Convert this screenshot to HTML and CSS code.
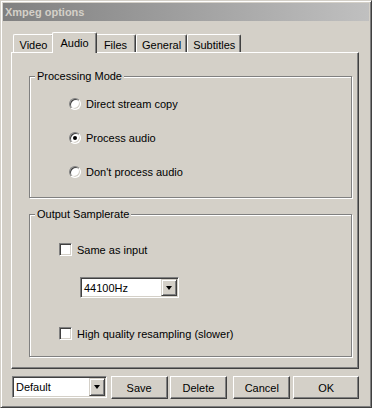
FILE: index.html
```html
<!DOCTYPE html>
<html lang="en">
<head>
	<meta charset="UTF-8">
	<title>Xmpeg options</title>
	<link rel="stylesheet" href="styles.css">
</head>
<body>
	<div class="window">
		<div class="titlebar">Xmpeg options</div>
		<div class="content">
			<div class="tabs">
				<div class="tab">Video</div>
				<div class="tab active">Audio</div>
				<div class="tab">Files</div>
				<div class="tab">General</div>
				<div class="tab">Subtitles</div>
			</div>
			<div class="panel">
				<fieldset class="group mode">
					<legend>Processing Mode</legend>
					<div class="options">
						<label class="option"><span class="radio"></span>Direct stream copy</label>
						<label class="option"><span class="radio checked"></span>Process audio</label>
						<label class="option"><span class="radio"></span>Don't process audio</label>
					</div>
				</fieldset>
				<fieldset class="group rate">
					<legend>Output Samplerate</legend>
					<div class="options">
						<label class="option"><span class="check"></span>Same as input</label>
						<div class="select rate-select">
							<span class="value">44100Hz</span>
							<span class="drop"><i class="arrow"></i></span>
						</div>
						<label class="option last"><span class="check"></span>High quality resampling (slower)</label>
					</div>
				</fieldset>
			</div>
			<div class="footer">
				<div class="select preset">
					<span class="value">Default</span>
					<span class="drop"><i class="arrow"></i></span>
				</div>
				<button class="btn save">Save</button>
				<button class="btn delete">Delete</button>
				<button class="btn cancel">Cancel</button>
				<button class="btn ok">OK</button>
			</div>
		</div>
	</div>
</body>
</html>
```

FILE: styles.css
```css
* { margin: 0; padding: 0; box-sizing: border-box; }
body {
	background: #d4d0c8;
	font: 11px "Liberation Sans", Arial, sans-serif;
	color: #000;
}
.window {
	width: 372px;
	height: 408px;
	padding: 2px;
	background: #d4d0c8;
	border: 1px solid;
	border-color: #d4d0c8 #404040 #404040 #d4d0c8;
	box-shadow: inset 1px 1px #fff, inset -1px -1px #808080;
}
.titlebar {
	height: 18px;
	line-height: 18px;
	padding-left: 2px;
	font-weight: bold;
	color: #d4d0c8;
	background: linear-gradient(to right, #808080, #c0c0c0);
}
.content {
	padding: 11px 10px 0 8px;
}
.tabs {
	display: flex;
	align-items: flex-end;
	height: 20px;
	padding-left: 2px;
	position: relative;
	z-index: 1;
}
.tab {
	min-width: 41px;
	height: 18px;
	padding: 3px 5px 0;
	line-height: 14px;
	text-align: center;
	border: 1px solid #fff;
	border-bottom: none;
	border-right-color: #404040;
	border-radius: 2px 2px 0 0;
	box-shadow: inset -1px 0 #808080;
}
.tab.active {
	min-width: 45px;
	height: 21px;
	margin: 0 -2px -1px;
	padding: 3px 7px 0;
	background: #d4d0c8;
	position: relative;
	z-index: 2;
}
.panel {
	height: 317px;
	padding: 0 6px 0 17px;
	border: 1px solid;
	border-color: #fff #404040 #404040 #fff;
	box-shadow: inset -1px -1px #808080;
}
.group {
	border: 1px solid #808080;
	box-shadow: inset 1px 1px #fff, 1px 1px #fff;
}
.group legend {
	margin-left: 5px;
	padding: 0 2px;
	line-height: 13px;
	background: #d4d0c8;
}
.mode {
	margin-top: 17px;
}
.mode .options {
	display: flex;
	flex-direction: column;
	gap: 21px;
	padding: 14px 0 19px 39px;
}
.rate {
	margin-top: 10px;
}
.rate .options {
	display: flex;
	flex-direction: column;
	align-items: flex-start;
	padding: 22px 0 16px 29px;
}
.option {
	display: flex;
	align-items: center;
	height: 13px;
}
.radio {
	width: 12px;
	height: 12px;
	margin-right: 5px;
	border-radius: 50%;
	background: #fff;
	border: 1px solid;
	border-color: #808080 #fff #fff #808080;
	box-shadow: inset 1px 1px #404040, inset -1px -1px #d4d0c8;
	display: flex;
	align-items: center;
	justify-content: center;
}
.radio.checked::after {
	content: '';
	width: 4px;
	height: 4px;
	border-radius: 50%;
	background: #000;
}
.check {
	width: 13px;
	height: 13px;
	margin-right: 5px;
	background: #fff;
	border: 1px solid;
	border-color: #808080 #fff #fff #808080;
	box-shadow: inset 1px 1px #404040, inset -1px -1px #d4d0c8;
}
.select {
	display: flex;
	padding: 1px;
	background: #fff;
	border: 1px solid;
	border-color: #808080 #fff #fff #808080;
	box-shadow: inset 1px 1px #404040, inset -1px -1px #d4d0c8;
}
.select .value {
	flex: 1;
	padding-left: 2px;
	display: flex;
	align-items: center;
}
.select .drop {
	width: 16px;
	background: #d4d0c8;
	border: 1px solid;
	border-color: #d4d0c8 #404040 #404040 #d4d0c8;
	box-shadow: inset 1px 1px #fff, inset -1px -1px #808080;
	display: flex;
	align-items: center;
	justify-content: center;
}
.arrow {
	width: 1px;
	height: 0;
	border-left: 3px solid transparent;
	border-right: 3px solid transparent;
	border-top: 4px solid #000;
}
.rate-select {
	width: 99px;
	height: 21px;
	margin: 21px 0 0 21px;
}
.option.last {
	margin-top: 29px;
}
.footer {
	display: flex;
	align-items: flex-start;
	margin-top: 7px;
}
.preset {
	width: 95px;
	height: 22px;
	margin-left: 1px;
}
.btn {
	height: 23px;
	font: inherit;
	color: #000;
	background: #d4d0c8;
	border: 1px solid;
	border-color: #fff #404040 #404040 #fff;
	box-shadow: inset -1px -1px #808080;
}
.save { width: 57px; margin-left: 4px; }
.delete { width: 58px; margin-left: 2px; }
.cancel { width: 57px; margin-left: 6px; }
.ok { width: 66px; margin-left: 3px; }
```
